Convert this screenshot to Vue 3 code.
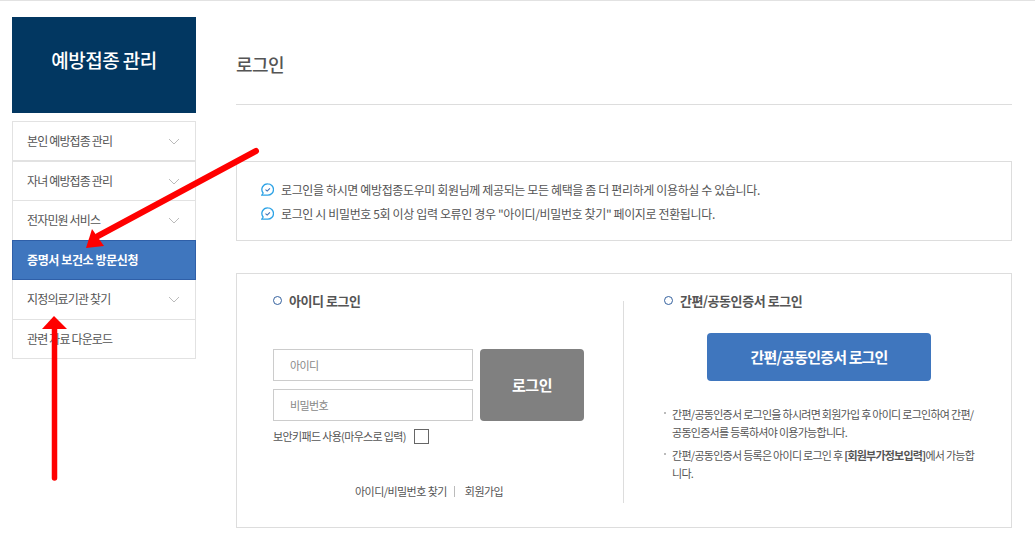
<script setup>
const menu = [
  { label: '본인 예방접종 관리', arrow: true },
  { label: '자녀 예방접종 관리', arrow: true },
  { label: '전자민원 서비스', arrow: true },
  { label: '증명서 보건소 방문신청', active: true },
  { label: '지정의료기관 찾기', arrow: true },
  { label: '관련 자료 다운로드' }
]
const notices = [
  '로그인을 하시면 예방접종도우미 회원님께 제공되는 모든 혜택을 좀 더 편리하게 이용하실 수 있습니다.',
  '로그인 시 비밀번호 5회 이상 입력 오류인 경우 "아이디/비밀번호 찾기" 페이지로 전환됩니다.'
]
</script>

<template>
  <div class="page">
    <aside class="side">
      <div class="side-head">예방접종 관리</div>
      <ul class="menu">
        <li v-for="m in menu" :key="m.label" :class="{ active: m.active }">
          <span>{{ m.label }}</span>
          <svg v-if="m.arrow" width="12" height="7" viewBox="0 0 12 7"><path d="M1 1l5 5 5-5" fill="none" stroke="#bbb" stroke-width="1"/></svg>
        </li>
      </ul>
    </aside>
    <main class="main">
      <h1 class="title">로그인</h1>
      <section class="notice">
        <p v-for="n in notices" :key="n">
          <svg width="13" height="14" viewBox="0 0 13 14"><path d="M6.800 .8a5.700 5.700 0 0 1 0 11.400H.8l1.300-2.200A5.700 5.700 0 0 1 6.800 .8z" fill="none" stroke="#2ea3e6" stroke-width="1.300"/><path d="M4.500 6.600l1.700 1.500 2.700-2.800" fill="none" stroke="#3a6fb5" stroke-width="1.100"/></svg>
          <span>{{ n }}</span>
        </p>
      </section>
      <section class="login">
        <div class="col left">
          <h2><i></i>아이디 로그인</h2>
          <div class="form">
            <div class="inputs">
              <div class="input">아이디</div>
              <div class="input">비밀번호</div>
            </div>
            <button class="btn-gray">로그인</button>
          </div>
          <div class="keypad"><span>보안키패드 사용(마우스로 입력)</span><b></b></div>
          <div class="links"><span>아이디/비밀번호 찾기</span><em></em><span>회원가입</span></div>
        </div>
        <div class="col right">
          <h2><i></i>간편/공동인증서 로그인</h2>
          <button class="btn-blue">간편/공동인증서 로그인</button>
          <ul class="desc">
            <li>간편/공동인증서 로그인을 하시려면 회원가입 후 아이디 로그인하여 간편/공동인증서를 등록하셔야 이용가능합니다.</li>
            <li>간편/공동인증서 등록은 아이디 로그인 후 <strong>[회원부가정보입력]</strong>에서 가능합니다.</li>
          </ul>
        </div>
      </section>
    </main>
    <svg class="arrows" width="1035" height="557" viewBox="0 0 1035 557">
      <path d="M256 151L98 236" stroke="#f00" stroke-width="6" stroke-linecap="round" fill="none"/>
      <path d="M86 248L92 229 104 246z" fill="#f00"/>
      <path d="M54.500 478V322" stroke="#f00" stroke-width="5.500" stroke-linecap="round" fill="none"/>
      <path d="M54 316L42 329H67z" fill="#f00"/>
    </svg>
  </div>
</template>

<style>
html, body { margin: 0; background: #fff; }
</style>

<style scoped>
.page {
  position: relative;
  width: 1035px;
  height: 557px;
  box-sizing: border-box;
  overflow: hidden;
  border-top: 1px solid #e2e2e2;
  padding: 16px 23px 0 12px;
  display: flex;
  gap: 40px;
  font-family: "Noto Sans CJK KR", "Noto Sans", sans-serif;
  color: #555;
  background: #fff;
}
.side { width: 184px; flex: none; }
.side-head {
  height: 96px;
  background: #023761;
  color: #fff;
  font-size: 19px;
  font-weight: 500;
  letter-spacing: -0.55px;
  display: flex;
  align-items: center;
  justify-content: center;
  padding-bottom: 11px;
  box-sizing: border-box;
}
.menu { list-style: none; margin: 8px 0 0; padding: 0; }
.menu li {
  height: 40px;
  box-sizing: border-box;
  border: 1px solid #e2e2e2;
  margin-top: -1px;
  padding: 0 15px 2px 14px;
  display: flex;
  align-items: center;
  justify-content: space-between;
  font-size: 12px;
  letter-spacing: -0.85px;
  color: #555;
}
.menu li:first-child, .menu li:nth-child(2) { margin-top: 0; }
.menu li:nth-child(3), .menu li:nth-child(5) { height: 41px; }
.menu li svg { margin-top: 2px; }
.menu li.active {
  background: #3f76be;
  border-color: #2f5fa8;
  color: #fff;
  font-weight: 700;
  letter-spacing: -0.4px;
  position: relative;
}
.main { width: 776px; flex: none; }
.title {
  margin: 0;
  height: 88px;
  box-sizing: border-box;
  padding-top: 32px;
  border-bottom: 1px solid #ddd;
  font-size: 18px;
  line-height: 30px;
  font-weight: 500;
  letter-spacing: -0.6px;
  color: #555;
}
.notice {
  margin-top: 56px;
  height: 80px;
  box-sizing: border-box;
  border: 1px solid #ddd;
  padding: 16px 24px 0;
}
.notice p {
  margin: 0 0 2px;
  height: 22px;
  display: flex;
  align-items: center;
  gap: 7px;
  font-size: 12px;
  letter-spacing: -0.37px;
  color: #555;
}
.notice svg { flex: none; margin-top: 2px; }
.login {
  margin-top: 32px;
  height: 255px;
  box-sizing: border-box;
  border: 1px solid #ddd;
  display: flex;
  padding: 17px 0 0;
}
.col { box-sizing: border-box; }
.left {
  width: 387px;
  height: 202px;
  padding: 0 0 0 36px;
  border-right: 1px solid #ddd;
  margin-top: 10px;
}
.left h2 { margin-top: -10px; }
.right { padding-left: 40px; width: 352px; }
h2 {
  margin: 0;
  height: 18px;
  display: flex;
  align-items: center;
  gap: 7px;
  font-size: 13px;
  font-weight: 700;
  letter-spacing: -0.45px;
  color: #555;
}
h2 i {
  width: 9px;
  height: 9px;
  box-sizing: border-box;
  border: 1.5px solid #34619e;
  border-radius: 50%;
}
.form { display: flex; gap: 7px; margin-top: 40px; }
.inputs { display: flex; flex-direction: column; gap: 8px; }
.input {
  width: 200px;
  height: 32px;
  box-sizing: border-box;
  border: 1px solid #ccc;
  padding-left: 16px;
  display: flex;
  align-items: center;
  font-size: 11px;
  letter-spacing: -0.6px;
  color: #888;
}
.btn-gray {
  width: 104px;
  height: 72px;
  border: 0;
  border-radius: 4px;
  background: #808080;
  color: #fff;
  font: 700 15px "Noto Sans CJK KR", sans-serif;
  letter-spacing: -0.4px;
  padding: 0 0 2px;
}
.keypad {
  display: flex;
  align-items: center;
  gap: 8px;
  margin-top: 3px;
  height: 24px;
  font-size: 11px;
  letter-spacing: -0.65px;
  color: #555;
}
.keypad b {
  width: 15px;
  height: 15px;
  box-sizing: border-box;
  border: 1px solid #666;
}
.links {
  margin-top: 34px;
  margin-left: 82px;
  display: flex;
  align-items: center;
  font-size: 11px;
  letter-spacing: -0.55px;
  color: #555;
  height: 18px;
}
.links em { width: 1px; height: 11px; background: #bbb; margin: 0 10px 0 7px; }
.btn-blue {
  display: block;
  width: 224px;
  height: 48px;
  margin: 24px 0 0 43px;
  border: 0;
  border-radius: 4px;
  background: #3f76be;
  color: #fff;
  font: 700 15px "Noto Sans CJK KR", sans-serif;
  letter-spacing: -0.85px;
  padding: 0 0 2px;
}
.desc {
  list-style: none;
  margin: 24px 0 0;
  padding: 0;
  width: 314px;
  font-size: 11px;
  line-height: 18px;
  letter-spacing: -0.72px;
  color: #555;
}
.desc li {
  position: relative;
  padding-left: 8px;
  margin-bottom: 5px;
  word-break: break-all;
}
.desc li::before {
  content: "";
  position: absolute;
  left: 0;
  top: 7px;
  width: 2px;
  height: 2px;
  background: #bbb;
}
.desc strong { font-weight: 700; letter-spacing: -0.8px; }
.arrows { position: absolute; left: 0; top: -1px; pointer-events: none; }
</style>
